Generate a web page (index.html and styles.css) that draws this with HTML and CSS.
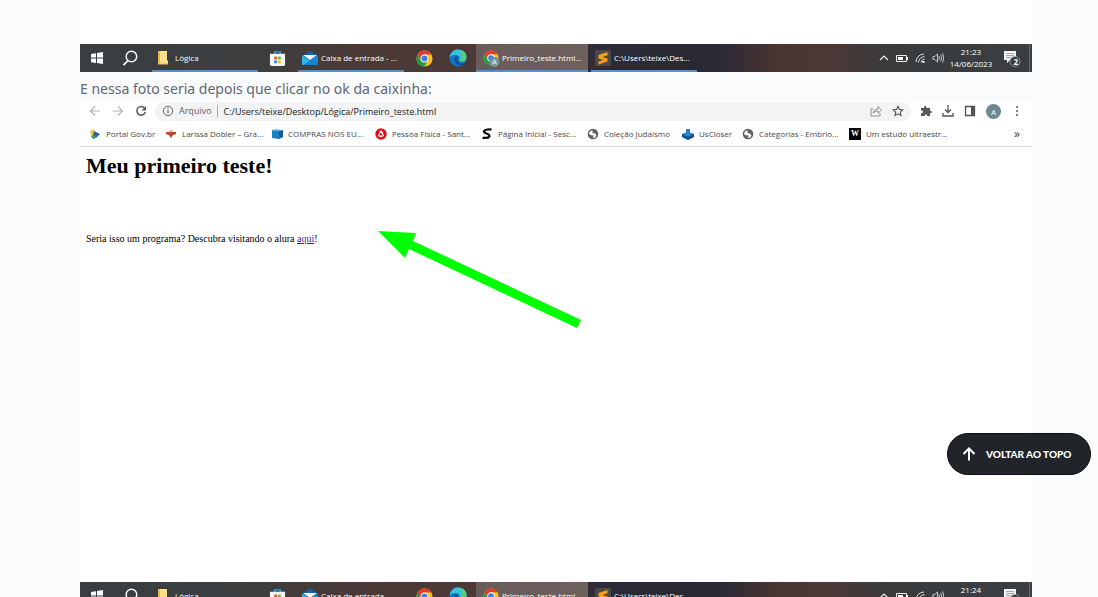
FILE: index.html
```html
<!DOCTYPE html>
<html lang="pt-BR">
<head>
<meta charset="utf-8">
<title>Meu primeiro teste</title>
<link rel="stylesheet" href="styles.css">
</head>
<body>
<svg class="defs" aria-hidden="true">
  <symbol id="win" viewBox="0 0 14 14"><path fill="#fff" d="M1 3l5-.8v4.400H1zM7 2l6-1v5.600H7zM1 7.500h5v4.400L1 11.200zM7 7.500h6V13l-6-1z"/></symbol>
  <symbol id="search" viewBox="0 0 18 18"><circle cx="10" cy="7" r="5.600" fill="none" stroke="#fff" stroke-width="1.500"/><path d="M6 11.500L1.500 16" stroke="#fff" stroke-width="1.700"/></symbol>
  <symbol id="folder" viewBox="0 0 12 16"><path fill="#e9b949" d="M1 1h9v13H1z"/><path fill="#fbe08c" d="M3 1h7v9l1 1v3H3z"/><path fill="#f4cd68" d="M1 13h10v1.500H1z"/></symbol>
  <symbol id="store" viewBox="0 0 18 18"><path d="M6 5V2h6v3" fill="none" stroke="#35a5dc" stroke-width="1.500"/><path fill="#f4f5f6" d="M1 4h16v11q0 2-2 2H3q-2 0-2-2z"/><path fill="#e8502e" d="M5.500 7h3v3h-3z"/><path fill="#72b52e" d="M9.500 7h3v3h-3z"/><path fill="#2695d8" d="M5.500 11h3v3h-3z"/><path fill="#f5b71f" d="M9.500 11h3v3h-3z"/></symbol>
  <symbol id="mail" viewBox="0 0 18 16"><path fill="#1261a9" d="M1 6l8-5.500L17 6v4H1z"/><path fill="#37b5ee" d="M1 5.500l8 5.200 8-5.200V15H1z"/><path fill="#1686d2" d="M17 5.500V15H2z"/><path fill="#f5f9fc" d="M2 5h14l-7 5z"/></symbol>
  <symbol id="chrome" viewBox="0 0 18 18"><circle cx="9" cy="9" r="8.500" fill="#fbc116"/><path fill="#e33b2e" d="M1.600 4.800A8.500 8.500 0 0 1 16.400 4.800H9L5.400 11.200z"/><path fill="#259b48" d="M1.600 4.800A8.500 8.500 0 0 0 8.800 17.500L12.500 11 5.500 11z"/><circle cx="9" cy="9" r="4.200" fill="#fff"/><circle cx="9" cy="9" r="3.200" fill="#3c7fe4"/></symbol>
  <symbol id="edge" viewBox="0 0 18 18"><circle cx="9" cy="9" r="8.500" fill="#1277c8"/><path fill="#36c2d9" d="M.6 8C1.500 3 5 .5 9 .5c5 0 8.500 3.500 8.500 7.500 0 3-2 4.500-4.500 4.500-2 0-3-1-2.500-2 1-2.500-1-4.500-4-4.500C4 6 2 6.800.6 8z"/><path fill="#55cf70" d="M11 .8c4 .8 6.500 3.700 6.500 7.200 0 3-2 4.500-4.500 4.500-2 0-3-1-2.500-2 3 0 4.500-4.500.5-9.700z"/><path fill="#164e9c" d="M6 8c-2 4 1 8.500 6 8.200 2-.2 3.500-1.200 4.500-2.500-4 2-8 .3-8-3.700L9 7z"/></symbol>
  <symbol id="subl" viewBox="0 0 16 16"><rect width="16" height="16" rx="1" fill="#4b4947"/><path fill="#ff9d16" d="M3.500 5L12.500 2v3.300L7.500 7l5 1.500v3L3.500 14.500v-3L8.500 10l-5-1.500z"/></symbol>
  <symbol id="up" viewBox="0 0 10 10"><path d="M1 7l4-4 4 4" fill="none" stroke="#eee" stroke-width="1.200"/></symbol>
  <symbol id="batt" viewBox="0 0 12 10"><path d="M.5 2.500h10v6H.5z" fill="none" stroke="#eee"/><path fill="#fff" d="M2 4h5v3H2zM11 4h1v3h-1z"/></symbol>
  <symbol id="wifi" viewBox="0 0 10 10"><path d="M1 9A8 8 0 0 1 9 1M3.500 9.500A6 6 0 0 1 9.500 3.700M6 9.500A4 4 0 0 1 9.500 6.200" fill="none" stroke="#ddd"/><path fill="#fff" d="M7.500 8h2v2h-2z"/></symbol>
  <symbol id="sound" viewBox="0 0 13 12"><path d="M1 4.500h2l3-3v9l-3-3H1zM7.500 4q1.300 2 0 4M9.500 2.500q2 3.500 0 7M11.500 1q2.500 5 0 10" fill="none" stroke="#e4e4e4" stroke-width=".9"/></symbol>
  <symbol id="note" viewBox="0 0 18 18"><path fill="#f3f3f3" d="M1 2h12v9H7l-3 3v-3H1z"/><path d="M3 4.500h8M3 6.500h8M3 8.500h5" stroke="#888" stroke-width=".7"/><circle cx="12" cy="12.500" r="5" fill="#383b3d" stroke="#aaa" stroke-width=".8"/></symbol>
  <symbol id="globe" viewBox="0 0 12 12"><circle cx="6" cy="6" r="5.300" fill="#5f6368"/><path fill="#fff" d="M2 5.500Q2.500 3 5 2.500l1 1-1 1.500 3 .5 1.500 2Q8.500 10 6 10l.5-2.500L3 7z"/></symbol>
</svg>

<main class="page">
  <div class="shot-end"></div>
  <div class="taskbar">
    <svg class="cell start"><use href="#win" x="10" y="7" width="14" height="14"/></svg>
    <svg class="cell start"><use href="#search" x="8" y="6" width="17" height="17"/></svg>
    <div class="task first"><svg class="ico"><use href="#folder" x="2" y="1" width="12" height="16"/></svg><span>Lógica</span></div>
    <svg class="cell store"><use href="#store" x="11" y="6" width="17" height="17"/></svg>
    <div class="task"><svg class="ico"><use href="#mail"/></svg><span>Caixa de entrada - ...</span></div>
    <svg class="cell store"><use href="#chrome" x="12" y="6" width="17" height="17"/></svg>
    <svg class="cell edge"><use href="#edge" x="5" y="5" width="18" height="18"/></svg>
    <div class="task active"><svg class="ico" viewBox="0 0 18 18"><use href="#chrome" x="1" y="1" width="16" height="16"/><circle cx="12.500" cy="13" r="5" fill="#78909c"/><path d="M10.500 15.500l2-5 2 5M11.300 14h2.400" fill="none" stroke="#fff" stroke-width=".8"/></svg><span>Primeiro_teste.html...</span></div>
    <div class="task"><svg class="ico"><use href="#subl" x="1" y="1" width="16" height="16"/></svg><span>C:\Users\teixe\Des...</span></div>
    <div class="tray">
      <svg class="t10"><use href="#up"/></svg><svg class="t12"><use href="#batt"/></svg><svg class="t10"><use href="#wifi"/></svg><svg class="t12"><use href="#sound"/></svg>
      <div class="clock"><span>21:23</span><span>14/06/2023</span></div>
      <div class="notes"><svg><use href="#note"/></svg><b>2</b></div>
    </div>
  </div>

  <p class="caption">E nessa foto seria depois que clicar no ok da caixinha:</p>

  <section class="browser">
    <div class="toolbar">
      <svg class="nav" viewBox="0 0 12 12"><path d="M11 6H1.500M6 1.500L1.500 6 6 10.500" fill="none" stroke="#b4b6b8" stroke-width="1.200"/></svg>
      <svg class="nav" viewBox="0 0 12 12"><path d="M1 6h9.500M6 1.500L10.500 6 6 10.500" fill="none" stroke="#b4b6b8" stroke-width="1.200"/></svg>
      <svg class="nav" viewBox="0 0 12 12"><path d="M9.800 3.500A4.300 4.300 0 1 0 10.300 7" fill="none" stroke="#55585c" stroke-width="1.500"/><path fill="#55585c" d="M11 1v4.500H6.500z"/></svg>
      <div class="address">
        <svg class="i12" viewBox="0 0 12 12"><circle cx="6" cy="6" r="4.700" fill="none" stroke="#5f6368"/><path d="M6 5.300v3.200M6 3v1.200" stroke="#5f6368" stroke-width="1.100"/></svg>
        <span class="scheme">Arquivo</span>
        <span class="url">C:/Users/teixe/Desktop/Lógica/Primeiro_teste.html</span>
        <svg class="i12" viewBox="0 0 12 12"><path d="M3 4H1v7h9V8M3 8q.5-4 5-4V1.500L11.500 5 8 8.200V6Q5 6 3 8z" fill="none" stroke="#777a7e" stroke-width=".8"/></svg>
        <svg class="i12" viewBox="0 0 12 12"><path d="M6 1.300l1.400 3.100 3.400.4-2.500 2.300.7 3.400-3-1.700-3 1.700.7-3.400L1.200 4.800l3.400-.4z" fill="none" stroke="#4f5256" stroke-width="1.100"/></svg>
      </div>
      <div class="tools">
        <svg class="i12" viewBox="0 0 12 12"><path fill="#55585c" d="M1 3h3q-.3-2 1.200-2T6.500 3H10v2.700q1.800 0 1.800 1.300T10 8.300V11H7.300Q7.200 9.300 6 9.300T4.700 11H1V8.300q2 0 2-1.500T1 5.500z"/></svg>
        <svg class="i12" viewBox="0 0 12 12"><path d="M6 0v7M3 4.500l3 3 3-3M1 8v3h10V8" fill="none" stroke="#4f5256" stroke-width="1.300"/></svg>
        <svg class="i12" viewBox="0 0 12 12"><path d="M1.500 1.500h9v9h-9z" fill="none" stroke="#4f5256" stroke-width="1.300"/><path fill="#4f5256" d="M7 1.500h3.500v9H7z"/></svg>
        <span class="avatar">A</span>
        <svg class="i12" viewBox="0 0 12 12"><g fill="#55585c"><circle cx="6" cy="2" r="1"/><circle cx="6" cy="6" r="1"/><circle cx="6" cy="10" r="1"/></g></svg>
      </div>
    </div>
    <nav class="bookmarks">
      <a class="b1" href="#"><svg class="i12" viewBox="0 0 12 12"><path fill="#f2c830" d="M1 3l4-2 2 5-4 4z"/><path fill="#2c62b8" d="M5 3l6 3-4 4-3-3z"/><path fill="#3e9d59" d="M2 8l3-1 2 3-3 1z"/></svg>Portal Gov.br</a>
      <a class="b2" href="#"><svg class="i12" viewBox="0 0 12 12"><path fill="#b34a2d" d="M1 4h10v2L8 7 6 10 4 7 1 6z"/><path fill="#ecc2a2" d="M4 2h4v2H4z"/></svg>Larissa Dobler – Gra...</a>
      <a class="b3" href="#"><svg class="i12" viewBox="0 0 12 12"><path fill="#1d7fc0" d="M1 2l7 1v8L1 10z"/><path fill="#6bb7e4" d="M1 2l4-1 7 1-4 1z"/><path fill="#155d98" d="M8 3l4-1v7l-4 2z"/></svg>COMPRAS NOS EU...</a>
      <a class="b4" href="#"><svg class="i12" viewBox="0 0 12 12"><circle cx="6" cy="6" r="5.700" fill="#dc1118"/><path fill="#fff" d="M6 2q3 3 2 4 3 2-2 3.300Q1 8 4 6q0-2 2-4z"/><path fill="#dc1118" d="M5.500 4.500L8 7.500H4z"/></svg>Pessoa Física - Sant...</a>
      <a class="b5" href="#"><svg class="i12" viewBox="0 0 12 12"><path d="M10.500 1.500Q4 1 3 3.500C3 6 8.500 5 8.500 8Q8 10.500 1.500 9.800" fill="none" stroke="#111" stroke-width="2.300"/></svg>Página Inicial - Sesc...</a>
      <a class="b6" href="#"><svg class="i12"><use href="#globe"/></svg>Coleção Judaísmo</a>
      <a class="b7" href="#"><svg class="i12" viewBox="0 0 12 12"><path fill="#0d4d91" d="M0 6l6-2 6 2v3l-6 3-6-3z"/><path fill="#2c83c9" d="M0 6l6-2 6 2-6 3zM4 1h4v5H4z"/></svg>UsCloser</a>
      <a class="b8" href="#"><svg class="i12"><use href="#globe"/></svg>Categorias - Embrio...</a>
      <a class="b9" href="#"><span class="wbox">W</span>Um estudo ultraestr...</a>
      <span class="more">»</span>
    </nav>
    <article class="doc">
      <h1>Meu primeiro teste!</h1>
      <p>Seria isso um programa? Descubra visitando o alura <a href="#">aqui</a>!</p>
      <svg class="arrow" viewBox="0 0 204 98"><path fill="#0f0" d="M0 0L38 2 35 10 203 89 199 97 31 18 27 27z"/></svg>
    </article>
  </section>

  <div class="taskbar">
    <svg class="cell start"><use href="#win" x="10" y="7" width="14" height="14"/></svg>
    <svg class="cell start"><use href="#search" x="8" y="6" width="17" height="17"/></svg>
    <div class="task first"><svg class="ico"><use href="#folder" x="2" y="1" width="12" height="16"/></svg><span>Lógica</span></div>
    <svg class="cell store"><use href="#store" x="11" y="6" width="17" height="17"/></svg>
    <div class="task"><svg class="ico"><use href="#mail"/></svg><span>Caixa de entrada - ...</span></div>
    <svg class="cell store"><use href="#chrome" x="12" y="6" width="17" height="17"/></svg>
    <svg class="cell edge"><use href="#edge" x="5" y="5" width="18" height="18"/></svg>
    <div class="task active"><svg class="ico" viewBox="0 0 18 18"><use href="#chrome" x="1" y="1" width="16" height="16"/></svg><span>Primeiro_teste.html...</span></div>
    <div class="task"><svg class="ico"><use href="#subl" x="1" y="1" width="16" height="16"/></svg><span>C:\Users\teixe\Des...</span></div>
    <div class="tray">
      <svg class="t10"><use href="#up"/></svg><svg class="t12"><use href="#batt"/></svg><svg class="t10"><use href="#wifi"/></svg><svg class="t12"><use href="#sound"/></svg>
      <div class="clock"><span>21:24</span><span>14/06/2023</span></div>
      <div class="notes"><svg><use href="#note"/></svg><b>2</b></div>
    </div>
  </div>
</main>

<button class="to-top" type="button"><svg viewBox="0 0 14 14"><path d="M7 13.500V2M1.500 7L7 1.500 12.500 7" fill="none" stroke="#fff" stroke-width="2"/></svg>VOLTAR AO TOPO</button>
</body>
</html>
```
FILE: styles.css
```css
* { box-sizing: border-box; }
body { margin: 0; height: 100vh; overflow: hidden; background: #fafbfd; font-family: "Open Sans", sans-serif; }
svg { display: block; flex: none; }
.defs { position: absolute; width: 0; height: 0; }
.page { padding: 0 66px 0 80px; }
.shot-end { height: 44px; background: #fff; }

.taskbar {
  display: flex; height: 28px; color: #fff; font-size: 8px; white-space: nowrap;
  background: linear-gradient(90deg, #3a3e41 0%, #3c3e40 17%, #4a3935 30%, #4a3a38 42%, #2b2b38 56%, #292935 67%, #493532 73%, #4b3735 79%, #393b3d 85%, #3b3f41 100%);
}
.cell { height: 28px; }
.start { width: 34px; }
.store { width: 40px; }
.edge { width: 28px; margin-right: 4px; }
.task { display: flex; align-items: center; gap: 2px; width: 106px; padding: 1px 0 0 3px; border-bottom: 2px solid #5a8fc8; }
.task.first { margin-left: 4px; }
.task.active { width: 112px; margin-right: 3px; padding-left: 6px; background: linear-gradient(90deg, #685b59, #6e605d); }
.ico { width: 18px; height: 18px; }
.tray { display: flex; align-items: center; gap: 7px; margin-left: auto; margin-right: 2px; padding-right: 8px; border-right: 1px solid #686b6d; }
.t10 { width: 10px; height: 10px; }
.t12 { width: 12px; height: 12px; }
.clock { display: flex; flex-direction: column; width: 40px; align-items: center; line-height: 12px; }
.notes { position: relative; margin-left: 5px; }
.notes svg { width: 18px; height: 18px; }
.notes b { position: absolute; right: 3px; bottom: 0; line-height: 11px; }

.caption { margin: 0; height: 29px; color: #606773; font-family: "Noto Sans", sans-serif; font-size: 14px; line-height: 33px; white-space: nowrap; }

.browser { background: #fff; font-size: 8px; color: #3c4043; }
.toolbar { display: flex; align-items: center; height: 20px; padding-left: 9px; }
.nav { width: 12px; height: 12px; margin-right: 11px; }
.i12 { width: 12px; height: 12px; }
.address { display: flex; flex: 1; align-items: center; height: 19px; margin-left: -3px; padding: 0 7px; border-radius: 10px; background: #f1f3f4; font-size: 9px; }
.scheme { margin-left: 5px; padding-right: 5px; border-right: 1px solid #a5a8ab; color: #5f6368; line-height: 12px; }
.url { flex: 1; margin-left: 6px; color: #202124; }
.address .i12:last-child { margin-left: 10px; }
.tools { display: flex; align-items: center; gap: 10px; padding: 0 9px; }
.avatar { width: 15px; height: 15px; border-radius: 50%; background: #6c8792; color: #fff; line-height: 15px; text-align: center; }
.bookmarks { display: flex; align-items: center; height: 26px; padding: 0 12px 0 9px; border-bottom: 1px solid #d9dadc; white-space: nowrap; }
.bookmarks a { display: flex; align-items: center; gap: 5px; flex: none; color: #46494d; text-decoration: none; }
.b1 { width: 76px; }
.b2 { width: 106px; }
.b3 { width: 104px; }
.b4 { width: 106px; }
.b5 { width: 106px; }
.b6 { width: 95px; }
.b7 { width: 60px; }
.b8 { width: 107px; }
.wbox { width: 12px; height: 12px; background: #000; color: #fff; font: bold 8px/12px "Liberation Serif", serif; text-align: center; }
.more { margin-left: auto; font-size: 12px; }

.doc { position: relative; height: 435px; padding: 5px 6px; color: #000; font-family: "Liberation Serif", serif; }
.doc h1 { margin: 0; font-size: 22px; line-height: 28px; }
.doc p { margin: 52px 0 0; font-size: 10px; line-height: 14px; }
.doc a { color: #551a8b; }
.arrow { position: absolute; left: 298px; top: 84px; width: 204px; height: 98px; }

.to-top {
  position: fixed; right: 7px; bottom: 122px; display: flex; align-items: center; gap: 10px;
  width: 144px; height: 42px; padding: 0 0 0 14px; border: 1px solid #0c0e10; border-radius: 21px;
  background: #212529; color: #fff; font: 900 10px Lato, sans-serif; white-space: nowrap;
}
.to-top svg { width: 14px; height: 14px; }
```
